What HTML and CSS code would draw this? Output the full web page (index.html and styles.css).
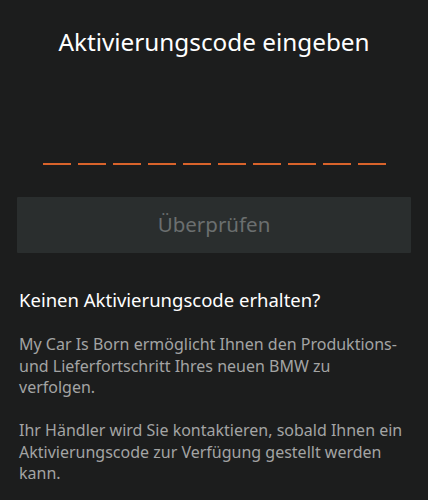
FILE: index.html
```html
<!DOCTYPE html>
<html lang="de">
  <head>
  <link rel="stylesheet" href="styles.css">
  </head>
  <body>
    <div class="container">
      <h1>Aktivierungscode eingeben</h1>
      <div class="code" id="code">
        <span></span><span></span><span></span><span></span><span></span>
        <span></span><span></span><span></span><span></span><span></span>
      </div>
      <button class="btn" id="check" disabled>Überprüfen</button>
      <div class="info">
        <h2>Keinen Aktivierungscode erhalten?</h2>
        <p>My Car Is Born ermöglicht Ihnen den Produktions- und Lieferfortschritt Ihres neuen BMW zu verfolgen.</p>
        <p>Ihr Händler wird Sie kontaktieren, sobald Ihnen ein Aktivierungscode zur Verfügung gestellt werden kann.</p>
      </div>
    </div>
  </body>
</html>
```

FILE: styles.css
```css
html, body { height: 100%; padding: 0; margin: 0; }
body { background: #1c1d1d; color: #a3a4a4; font: 16px/1.35 "Noto Sans", "Open Sans", sans-serif; }
button, div, p { font: inherit; }
.container { padding: 0 17px; }
h1 {
  margin: 0; padding-top: 26px; text-align: center;
  color: #fff; font-size: 24.3px; font-weight: 400; line-height: 32px;
}
.code { display: flex; justify-content: center; gap: 7px; margin-top: 105px; }
.code span { width: 28px; height: 2px; background: #d9632b; }
.btn {
  display: block; width: 100%; height: 56px; margin-top: 32px;
  background: #2a2e2e; color: #6b6f6f; border: none; border-radius: 1px;
  font-size: 20.5px;
}
.info { padding: 34px 5px 0 2px; }
h2 { margin: 0 0 21px; color: #fff; font-size: 18.5px; font-weight: 400; line-height: 26px; }
.info p { margin: 0 0 21.5px; line-height: 21.5px; }
```
